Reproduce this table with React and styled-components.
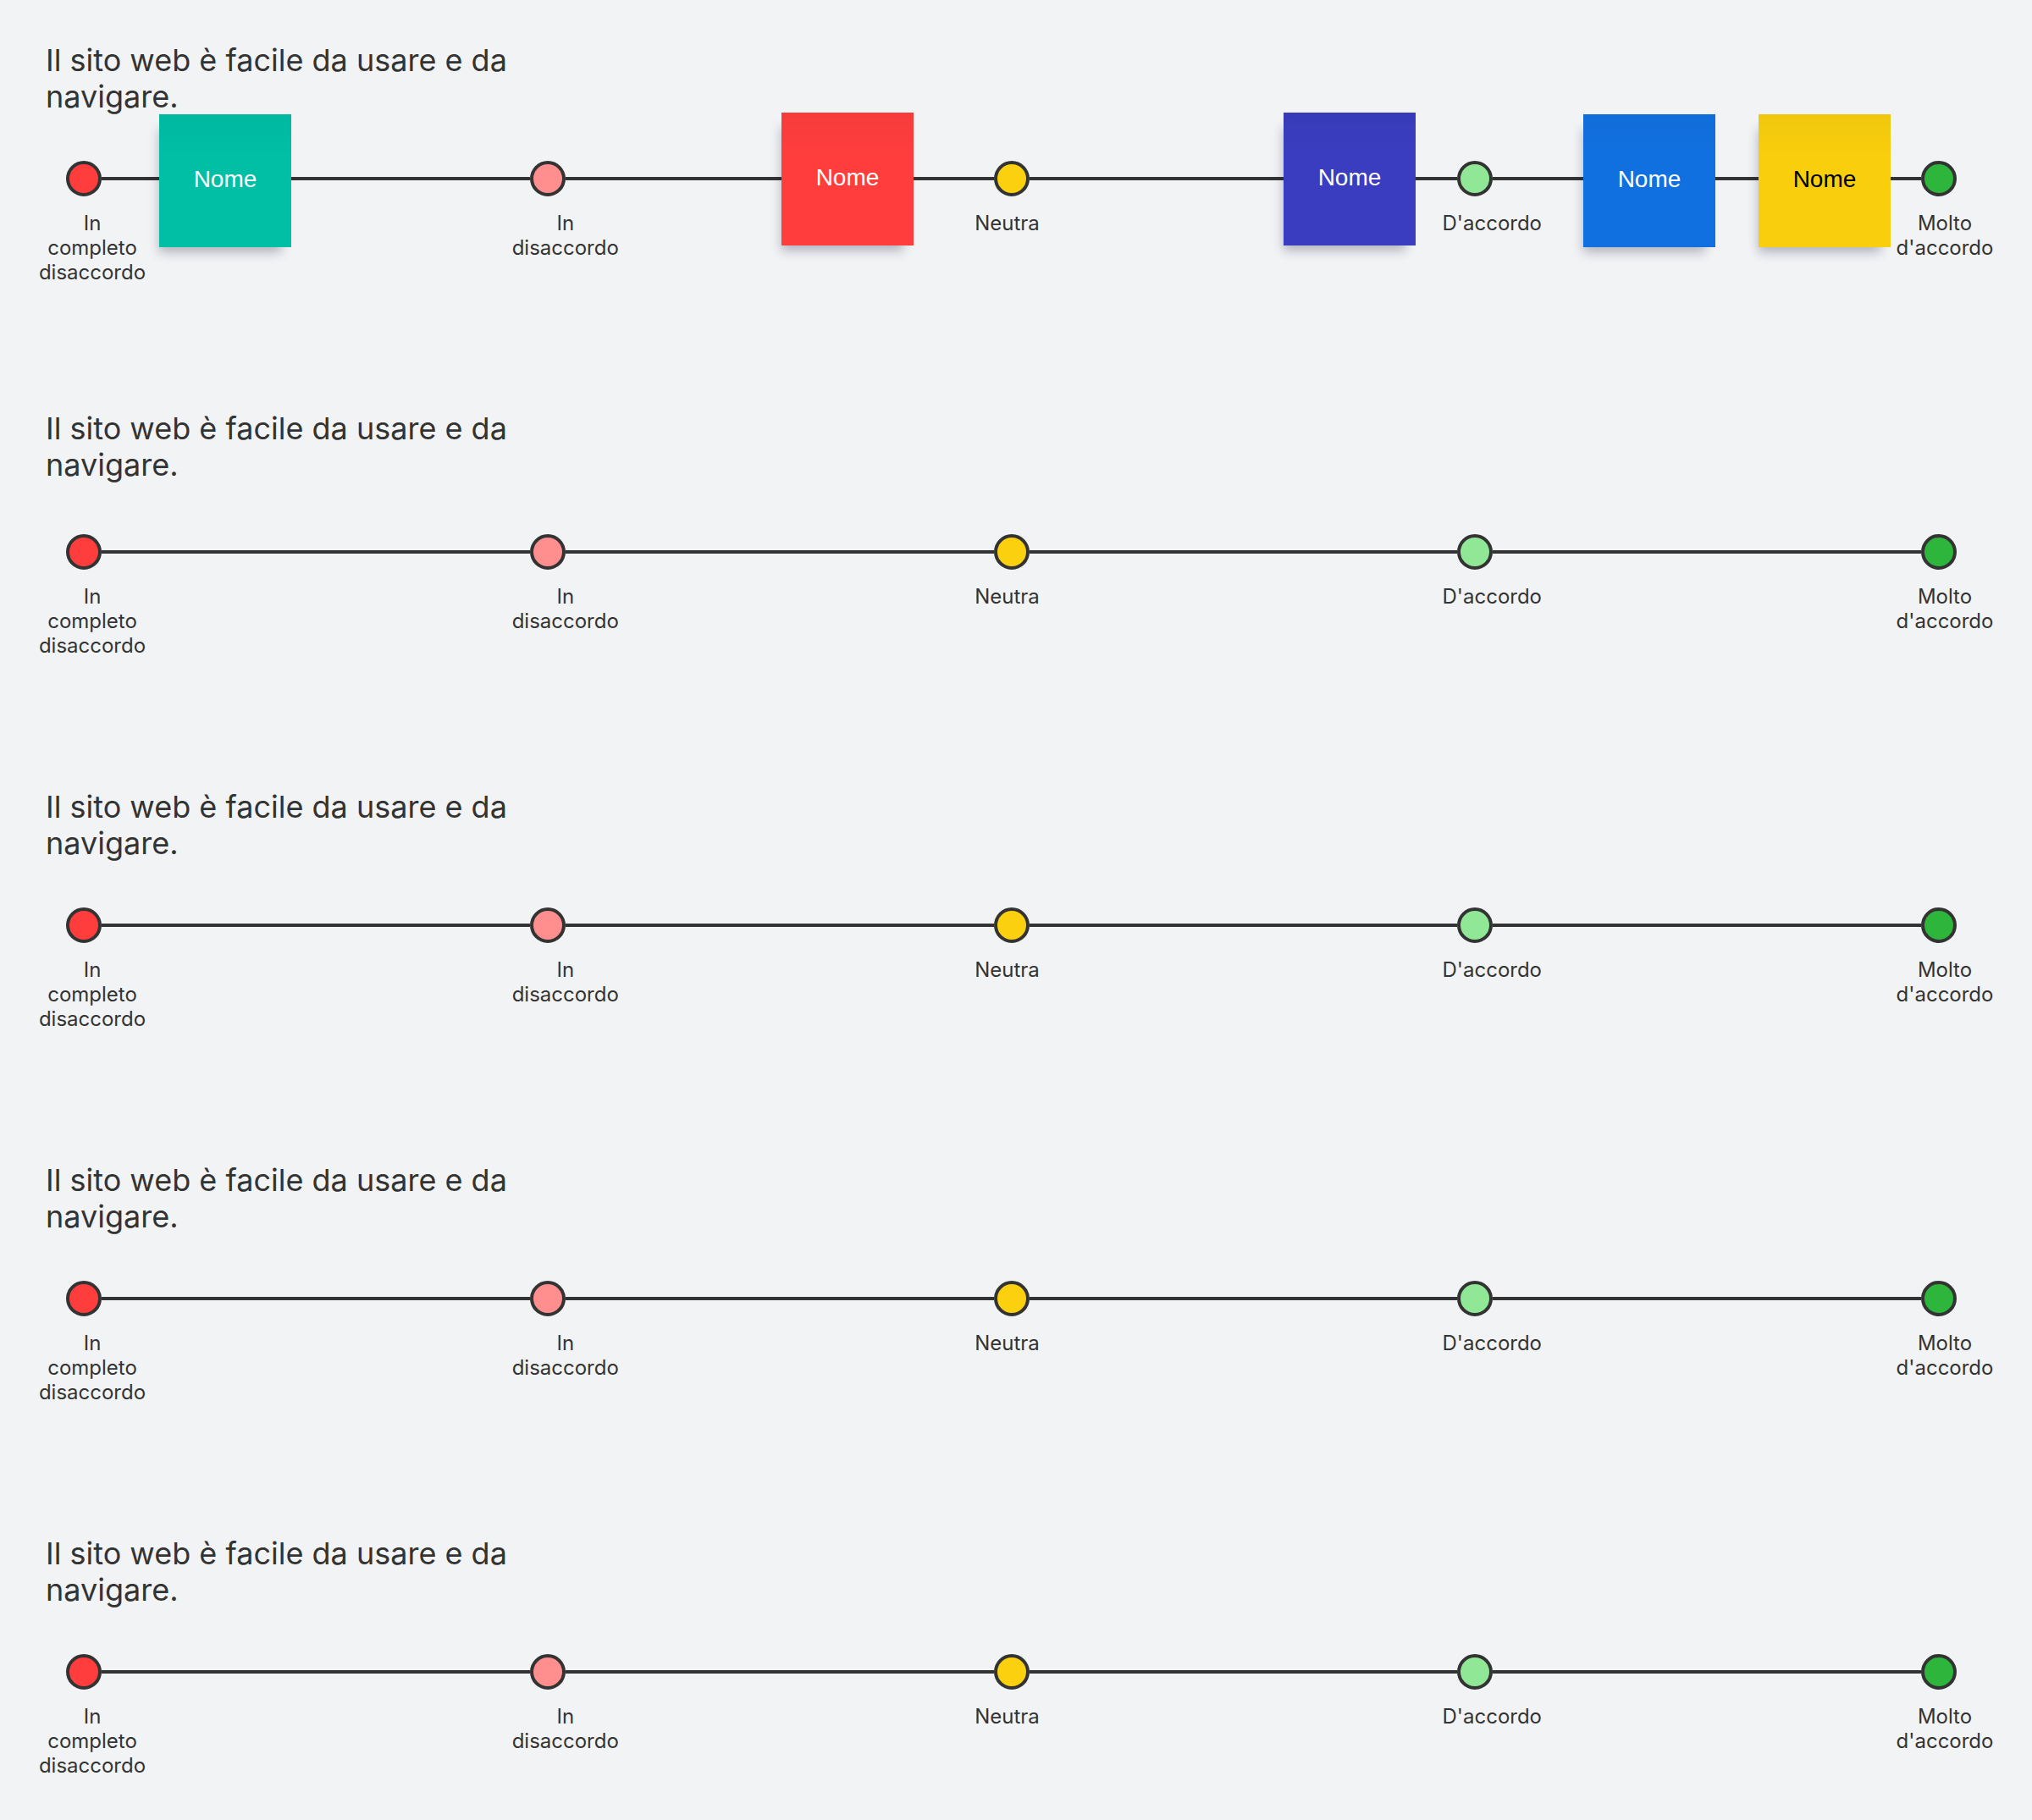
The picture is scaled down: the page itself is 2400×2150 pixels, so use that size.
import React from 'react';
import styled, { createGlobalStyle } from 'styled-components';

const GlobalStyle = createGlobalStyle`
    body {
        margin: 0;
        background: #f2f3f5;
        font-family: Inter, "Noto Sans", sans-serif;
        color: #333;
    }
`;

const STEPS = [
    { label: 'In completo disaccordo', color: '#ff3d3d', shift: 10 },
    { label: 'In disaccordo', color: '#ff8f8f', shift: 21 },
    { label: 'Neutra', color: '#fbd00f', shift: -5 },
    { label: "D'accordo", color: '#90e896', shift: 20 },
    { label: "Molto d'accordo", color: '#2db53c', shift: 7 },
];

// stickies on the first scale, placed by hand on the board
const NOTES = [
    { left: 110, top: -55, color: '#00bfa5', ink: '#fff' },
    { left: 845, top: -57, color: '#ff3d3d', ink: '#fff' },
    { left: 1438, top: -57, color: '#3a3dbf', ink: '#fff' },
    { left: 1792, top: -55, color: '#1170e0', ink: '#fff' },
    { left: 1999, top: -55, color: '#f9ce0d', ink: '#000' },
];

function Scale({ notes, lift = 0 }) {
    return (
        <Section>
            <Title $lift={lift}>Il sito web è facile da usare e da navigare.</Title>
            <Track>
                {STEPS.map((step, i) => (
                    <React.Fragment key={step.label}>
                        {i > 0 && <Segment />}
                        <Stop>
                            <Dot $color={step.color} />
                            <Label $shift={step.shift}>{step.label}</Label>
                        </Stop>
                    </React.Fragment>
                ))}

                {notes && notes.map((n, i) => (
                    <Sticky key={i} $left={n.left} $top={n.top} $color={n.color} $ink={n.ink}>
                        Nome
                    </Sticky>
                ))}
            </Track>
        </Section>
    );
}

export default function App() {
    return (
        <Board>
            <GlobalStyle />
            <Scale notes={NOTES} />
            <Scale lift={6} />
            <Scale />
            <Scale />
            <Scale />
        </Board>
    );
}

const Board = styled.main`
    display: flex;
    flex-direction: column;
    padding-top: 50px;
`;

const Section = styled.section`
    height: 441px;
    display: flex;
    flex-direction: column;
`;

const Title = styled.h2`
    margin: ${(props) => -props.$lift}px 0 ${(props) => props.$lift}px 54px;
    width: 600px;
    font-size: 36px;
    font-weight: 400;
    line-height: 43px;
    color: #333;
`;

const Track = styled.div`
    position: relative;
    display: flex;
    align-items: flex-start;
    margin: 54px 89px 0 78px;
`;

const Stop = styled.div`
    display: flex;
    flex-direction: column;
    align-items: center;
    width: 42px;
    flex-shrink: 0;
`;

const Dot = styled.span`
    width: 42px;
    height: 42px;
    box-sizing: border-box;
    border-radius: 50%;
    border: 4px solid #333;
    background: ${(props) => props.$color};
`;

const Segment = styled.span`
    flex: 1;
    height: 4px;
    margin-top: 19px;
    background: #333;
`;

const Label = styled.span`
    margin-top: 17px;
    width: min-content;
    text-align: center;
    font-size: 24px;
    line-height: 29px;
    color: #333;
    transform: translateX(${(props) => props.$shift}px);
`;

const Sticky = styled.div`
    position: absolute;
    left: ${(props) => props.$left}px;
    top: ${(props) => props.$top}px;
    width: 156px;
    height: 157px;
    display: flex;
    align-items: center;
    justify-content: center;
    padding-bottom: 4px;
    box-sizing: border-box;
    background: linear-gradient(180deg, rgba(0, 0, 0, 0.035), rgba(0, 0, 0, 0) 32%), ${(props) => props.$color};
    color: ${(props) => props.$ink};
    font-family: "Liberation Sans", Arial, sans-serif;
    font-size: 28px;
    box-shadow: -6px 12px 12px -6px rgba(30, 30, 60, 0.3);
`;
